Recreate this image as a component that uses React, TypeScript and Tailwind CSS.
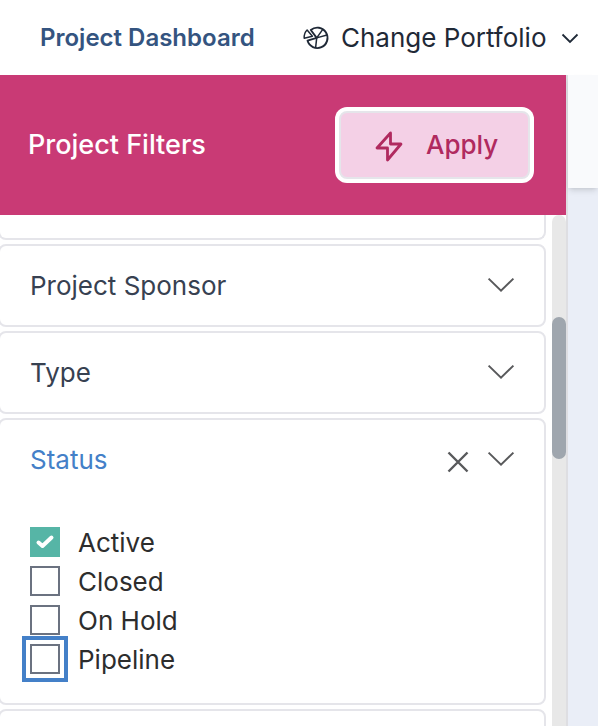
import { useState } from "react";

const statuses = ["Active", "Closed", "On Hold", "Pipeline"];

function Chevron() {
  return (
    <svg className="mb-0.5" width="28" height="16" viewBox="0 0 28 16" fill="none" stroke="#58595b" strokeWidth="2">
      <path d="M1.6 1.6 14 13.6 26.4 1.6" />
    </svg>
  );
}

function PortfolioIcon() {
  return (
    <svg width="28" height="26" viewBox="0 0 28 26" fill="none" stroke="#1f2937" strokeWidth="1.9" strokeLinejoin="round">
      <path d="M8.8 5A10.2 10.2 0 1 1 5.5 15.6L14.7 12.9Z" />
      <path d="M14.7 12.9 20.6 4.6M14.7 12.9 25 10M14.7 12.9 13.6 22.8" strokeWidth="1.5" />
      <path d="M5.1 5 10.4 11.3 2.2 13.2C2 9.9 2.8 7.2 5.1 5Z" strokeWidth="1.5" />
    </svg>
  );
}

function FilterRow({ label }: { label: string }) {
  return (
    <div className="h-[83px] shrink-0 flex items-center justify-between rounded-lg border-2 border-[#e5e5ea] pl-[30px] pr-[29px]">
      <span className="text-[#374151]">{label}</span>
      <Chevron />
    </div>
  );
}

export default function App() {
  const [checked, setChecked] = useState<string[]>(["Active"]);
  const [focused, setFocused] = useState("Pipeline");

  const toggle = (status: string) => {
    setFocused(status);
    setChecked((prev) =>
      prev.includes(status) ? prev.filter((s) => s !== status) : [...prev, status]
    );
  };

  return (
    <div className="w-[598px] h-[726px] overflow-hidden flex flex-col bg-white font-['Inter',sans-serif] text-[26px] leading-[39px]">
      <header className="h-[75px] shrink-0 flex items-center pl-10">
        <h1 className="w-[262px] shrink-0 text-[24px] font-semibold text-[#345480] whitespace-nowrap">Project Dashboard</h1>
        <button className="flex shrink-0 items-center text-[#1f2937] whitespace-nowrap">
          <PortfolioIcon />
          <span className="w-[231px] pl-[11px] text-left">Change Portfolio</span>
          <svg width="18" height="12" viewBox="0 0 18 12" fill="none" stroke="#1f2937" strokeWidth="1.8">
            <path d="M1.5 2.5 9 10 16.5 2.5" />
          </svg>
        </button>
      </header>

      <div className="flex flex-1 min-h-0">
        <aside className="w-[568px] shrink-0 flex flex-col border-r-2 border-[#dedee2]">
          <div className="h-[140px] shrink-0 flex items-center justify-between bg-[#c93a75] pl-7 pr-9">
            <h2 className="pb-0.5 text-[27px] font-medium text-white">Project Filters</h2>
            <button className="w-[191px] h-[68px] flex items-center rounded-lg border-2 border-[#e5e5ea] bg-[#f4d0e6] pl-[33px] font-medium text-[#b02a5f] ring-4 ring-white">
              <svg className="mr-[22px] mt-0.5" width="30" height="32" viewBox="0 0 30 32" fill="none" stroke="#b02a5f" strokeWidth="2.8" strokeLinejoin="round">
                <path d="M16.5 3 3 18H13.5V30L27 14H16.5Z" />
              </svg>
              <span className="pb-0.5">Apply</span>
            </button>
          </div>

          <div className="flex flex-1 min-h-0">
            <div className="w-[548px] -ml-0.5 shrink-0 flex flex-col gap-1 overflow-hidden">
              <div className="h-[25px] shrink-0 rounded-b-lg border-2 border-t-0 border-[#e5e5ea]" />
              <FilterRow label="Project Sponsor" />
              <FilterRow label="Type" />

              <section className="h-[287px] shrink-0 rounded-lg border-2 border-[#e5e5ea] pl-[30px] pr-[29px]">
                <div className="h-[79px] flex items-center">
                  <span className="flex-1 text-[#4480c8]">Status</span>
                  <button className="mr-[18px] mt-[5px]" aria-label="Clear status" onClick={() => setChecked([])}>
                    <svg width="22" height="22" viewBox="0 0 22 22" fill="none" stroke="#58595b" strokeWidth="2.4">
                      <path d="M1.5 1.5 20.5 20.5M20.5 1.5 1.5 20.5" />
                    </svg>
                  </button>
                  <Chevron />
                </div>
                <ul className="pt-6">
                  {statuses.map((status) => (
                    <li key={status} className="h-[39px] flex items-center">
                      <button
                        role="checkbox"
                        aria-checked={checked.includes(status)}
                        aria-label={status}
                        onClick={() => toggle(status)}
                        className={`size-[30px] mb-0.5 flex items-center justify-center ${
                          checked.includes(status) ? "bg-[#56b5a6]" : "border-2 border-[#6b7280] bg-white"
                        } ${focused === status ? "outline-4 outline-offset-4 outline-[#4480c8]" : "outline-none"}`}
                      >
                        {checked.includes(status) && (
                          <svg width="20" height="16" viewBox="0 0 20 16" fill="none" stroke="white" strokeWidth="4" strokeLinecap="round" strokeLinejoin="round">
                            <path d="M3.5 8.5 7.5 12 16.5 3.5" />
                          </svg>
                        )}
                      </button>
                      <span className="pl-[18px] text-[#2d2d2d]">{status}</span>
                    </li>
                  ))}
                </ul>
              </section>

              <div className="h-[83px] shrink-0 rounded-lg border-2 border-[#e5e5ea]" />
            </div>

            <div className="w-[14px] ml-1.5 shrink-0 rounded-t-full bg-[#e8e8e8] pt-[102px]">
              <div className="h-[142px] rounded-full bg-[#9fa6ae]" />
            </div>
          </div>
        </aside>

        <main className="flex-1 bg-[#eaeef7]">
          <div className="h-[113px] bg-[#f9fafc] shadow-md" />
        </main>
      </div>
    </div>
  );
}
